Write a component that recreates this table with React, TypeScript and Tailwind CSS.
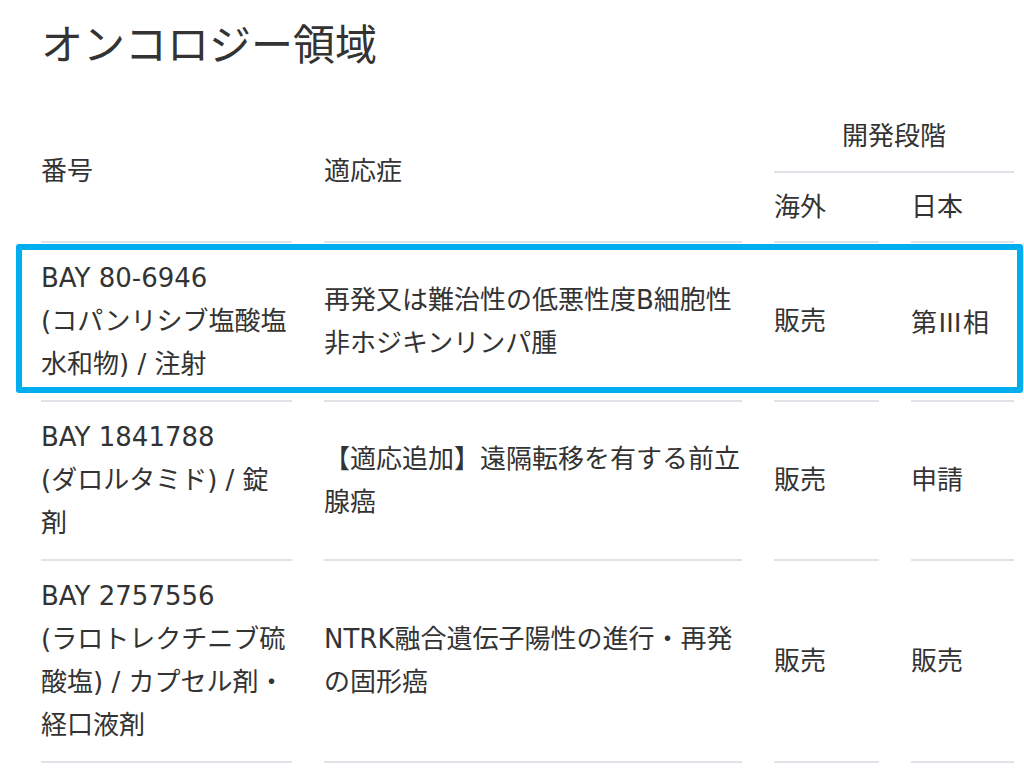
import React from "react";

const font = {
  fontFamily: '"DejaVu Sans", "Noto Sans CJK JP", sans-serif',
};

const cols = "grid w-[973px] grid-cols-[251px_418px_105px_103px] gap-x-[32px]";
const cell =
  "flex items-center border-b-2 border-[#dfe3e8] py-[14px] leading-[43px]";

type Row = { no: React.ReactNode; ind: string; overseas: string; japan: React.ReactNode; highlight?: boolean };

const rows: Row[] = [
  {
    no: (
      <>
        BAY 80-6946
        <br />
        (コパンリシブ塩酸塩水和物) / 注射
      </>
    ),
    ind: "再発又は難治性の低悪性度B細胞性非ホジキンリンパ腫",
    overseas: "販売",
    japan: (
      <span style={{ fontFamily: '"Noto Sans CJK JP", sans-serif' }}>第Ⅲ相</span>
    ),
    highlight: true,
  },
  {
    no: (
      <>
        BAY 1841788
        <br />
        (ダロルタミド) / 錠剤
      </>
    ),
    ind: "【適応追加】遠隔転移を有する前立腺癌",
    overseas: "販売",
    japan: "申請",
  },
  {
    no: (
      <>
        BAY 2757556
        <br />
        (ラロトレクチニブ硫酸塩) / カプセル剤・経口液剤
      </>
    ),
    ind: "NTRK融合遺伝子陽性の進行・再発の固形癌",
    overseas: "販売",
    japan: "販売",
  },
];

export default function App() {
  return (
    <div
      className="min-h-[774px] w-[1024px] overflow-hidden bg-white pl-[41px] pt-[21px] text-[#333333]"
      style={font}
    >
      <h1 className="text-[42px] font-normal leading-[50px] text-[#333333]">
        オンコロジー領域
      </h1>

      <div className="mt-[30px] text-[26px]">
        {/* header */}
        <div className={`${cols} grid-rows-[72px_70px]`}>
          <div className="row-span-2 flex items-center border-b-2 border-[#dfe3e8] leading-[43px]">
            番号
          </div>
          <div className="row-span-2 flex items-center border-b-2 border-[#dfe3e8] leading-[43px]">
            適応症
          </div>
          <div className="col-span-2 flex items-center justify-center border-b-2 border-[#dfe3e8] leading-[43px]">
            開発段階
          </div>
          <div className="flex items-center border-b-2 border-[#dfe3e8] leading-[43px]">
            海外
          </div>
          <div className="flex items-center border-b-2 border-[#dfe3e8] leading-[43px]">
            日本
          </div>
        </div>

        {/* body */}
        {rows.map((r, i) => (
          <div key={i} className={`relative ${cols}`}>
            <div className={cell}>
              <div>{r.no}</div>
            </div>
            <div className={cell}>
              <div>{r.ind}</div>
            </div>
            <div className={cell}>
              <div>{r.overseas}</div>
            </div>
            <div className={cell}>
              <div>{r.japan}</div>
            </div>
            {r.highlight && (
              <div className="pointer-events-none absolute -left-[25px] -right-[9px] top-[1px] bottom-[9px] rounded-[3px] border-[6px] border-[#00aeef]" />
            )}
          </div>
        ))}
      </div>
    </div>
  );
}
